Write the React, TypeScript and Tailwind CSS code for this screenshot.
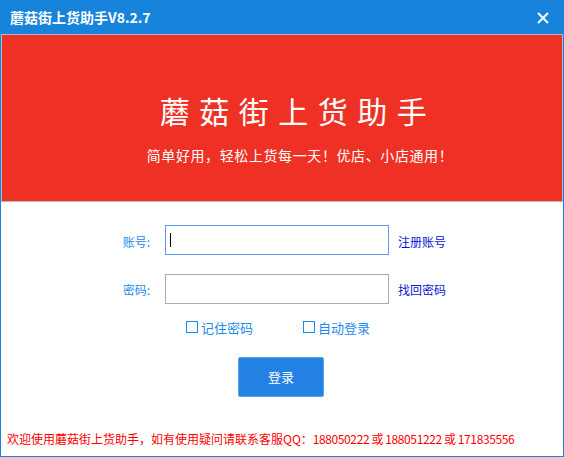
import React from "react";

const cjk = { fontFamily: '"Noto Sans CJK SC", "Noto Sans", sans-serif' };

export default function App() {
  return (
    <div className="w-[564px] h-[457px] bg-[#1783db] flex flex-col" style={cjk}>
      <div className="h-[34px] flex items-center justify-between pl-[10px] pr-[15px] text-white">
        <span className="text-[14px] font-bold leading-none">蘑菇街上货助手V8.2.7</span>
        <svg width="12" height="12" viewBox="0 0 12 12" className="mt-[1px]">
          <path d="M1 1 L11 11 M11 1 L1 11" stroke="white" strokeWidth="2" />
        </svg>
      </div>
      <div className="flex-1 mx-[1px] mb-[1px] bg-white flex flex-col">
        <div className="h-[168px] bg-[#ef3125] border border-[#b9b9b9] flex flex-col items-center">
          <div className="mt-[60px] text-white text-[30px] leading-[30px] tracking-[9.5px] pl-[32px]">蘑菇街上货助手</div>
          <div className="mt-[22px] text-white text-[14px] leading-[16px] tracking-[0.6px] pl-[36px]">简单好用，轻松上货每一天！优店、小店通用！</div>
        </div>
        <div className="mt-[23px] flex items-center">
          <div className="w-[149px] text-right text-[12px] text-[#1a8cf0] leading-none pt-[3px]">账号:</div>
          <div className="ml-[15px] w-[224px] h-[30px] border border-[#5c9de3] flex items-center pl-[4px]">
            <span className="w-[1px] h-[14px] bg-black" />
          </div>
          <a className="ml-[9px] text-[12px] text-[#0a14d6] leading-none pt-[4px]">注册账号</a>
        </div>
        <div className="mt-[19px] flex items-center">
          <div className="w-[149px] text-right text-[12px] text-[#1a8cf0] leading-none pt-[2px]">密码:</div>
          <div className="ml-[15px] w-[224px] h-[30px] border border-[#ababab]" />
          <a className="ml-[9px] text-[12px] text-[#0a14d6] leading-none pt-[2px]">找回密码</a>
        </div>
        <div className="mt-[16px] flex items-center h-[14px] text-[13px] text-[#1a8cf0] leading-none">
          <div className="ml-[185px] flex items-center">
            <span className="w-[12px] h-[12px] border-[1.5px] border-[#1a8cf0] mr-[3px]" />
            <span>记住密码</span>
          </div>
          <div className="ml-[50px] flex items-center">
            <span className="w-[12px] h-[12px] border-[1.5px] border-[#1a8cf0] mr-[3px]" />
            <span>自动登录</span>
          </div>
        </div>
        <div className="mt-[23px] flex">
          <button className="ml-[237px] w-[86px] h-[40px] bg-[#2482e4] border border-[#5aa2ee] rounded-[2px] text-white text-[13px]">登录</button>
        </div>
        <div className="mt-[36px] pl-[6px] text-[12px] leading-none text-[#ff0000] whitespace-nowrap">
          欢迎使用蘑菇街上货助手，如有使用疑问请联系客服QQ：
          <span className="tracking-[-0.4px]">188050222 或 188051222 或 171835556</span>
        </div>
      </div>
    </div>
  );
}
